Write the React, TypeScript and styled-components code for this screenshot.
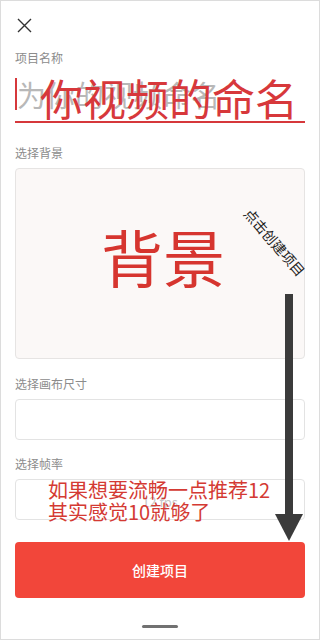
import styled, { createGlobalStyle } from "styled-components";

const GlobalStyle = createGlobalStyle`
  html, body {
    margin: 0;
    padding: 0;
    background: #ffffff;
  }
  body {
    font-family: "Noto Sans CJK SC", "Noto Sans", sans-serif;
  }
`;

const Screen = styled.div`
  position: relative;
  width: 320px;
  height: 640px;
  box-sizing: border-box;
  border: 1px solid #dcdcdc;
  padding: 0 14px;
  display: flex;
  flex-direction: column;
  background: #ffffff;
  overflow: hidden;
`;

const Header = styled.div`
  height: 49px;
  display: flex;
  align-items: flex-start;
  padding-top: 16px;
  box-sizing: border-box;
`;

const CloseButton = styled.button`
  width: 16px;
  height: 16px;
  margin-left: 1px;
  padding: 0;
  border: none;
  background: transparent;
  display: flex;
  align-items: center;
  justify-content: center;
`;

const Label = styled.div<{ $top?: number }>`
  margin-top: ${(p) => p.$top ?? 0}px;
  margin-bottom: 7px;
  font-size: 12px;
  line-height: 16px;
  color: #8c8c8c;
`;

const NameField = styled.div`
  height: 55px;
  margin-top: -7px;
  display: flex;
  align-items: center;
  border-bottom: 2px solid #d6383b;
`;

const Cursor = styled.span`
  width: 2px;
  height: 32px;
  background: #d6383b;
  flex-shrink: 0;
`;

const Placeholder = styled.span`
  font-size: 29px;
  line-height: 32px;
  color: #b8b8b8;
  white-space: nowrap;
`;

const BackgroundBox = styled.div`
  height: 191px;
  box-sizing: border-box;
  border: 1px solid #e6e4e3;
  border-radius: 4px;
  background: #fbf8f7;
  display: flex;
  align-items: center;
  justify-content: center;
  padding: 0 0 16px 6px;
`;

const BigRed = styled.span`
  font-size: 62px;
  line-height: 62px;
  color: #d6352f;
`;

const InputBox = styled.div`
  height: 41px;
  box-sizing: border-box;
  border: 1px solid #e3e3e3;
  border-radius: 4px;
  display: flex;
  align-items: center;
  justify-content: center;
`;

const FpsText = styled.span`
  font-size: 13px;
  color: #c6c6c6;
  margin-top: 4px;
`;

const CreateButton = styled.button`
  margin-top: 22px;
  height: 56px;
  border: none;
  border-radius: 4px;
  background: #f2463a;
  color: #ffffff;
  font-family: inherit;
  font-size: 14px;
  font-weight: 500;
`;

const HomeBar = styled.div`
  align-self: center;
  margin-top: 27px;
  width: 36px;
  height: 3px;
  border-radius: 2px;
  background: #717171;
`;

const NameOverlay = styled.div`
  position: absolute;
  left: 39px;
  top: 75px;
  font-size: 43px;
  line-height: 43px;
  color: #d7383b;
  white-space: nowrap;
`;

const TiltedNote = styled.div`
  position: absolute;
  left: 274px;
  top: 241px;
  transform: translate(-50%, -50%) rotate(49deg);
  font-size: 14px;
  color: #222222;
  white-space: nowrap;
`;

const Arrow = styled.svg`
  position: absolute;
  left: 273px;
  top: 293px;
`;

const RedNote = styled.div`
  position: absolute;
  left: 47px;
  top: 478px;
  font-size: 20px;
  line-height: 22px;
  color: #d43a33;
  white-space: nowrap;
`;

export default function App() {
  return (
    <>
      <GlobalStyle />
      <Screen>
        <Header>
          <CloseButton aria-label="close">
            <svg width="15" height="15" viewBox="0 0 15 15">
              <path d="M1 1L14 14M14 1L1 14" stroke="#333" strokeWidth="1.4" />
            </svg>
          </CloseButton>
        </Header>

        <Label>项目名称</Label>
        <NameField>
          <Cursor />
          <Placeholder>为你的视频命名</Placeholder>
        </NameField>

        <Label $top={22}>选择背景</Label>
        <BackgroundBox>
          <BigRed>背景</BigRed>
        </BackgroundBox>

        <Label $top={17}>选择画布尺寸</Label>
        <InputBox />

        <Label $top={16}>选择帧率</Label>
        <InputBox>
          <FpsText>12 fps</FpsText>
        </InputBox>

        <CreateButton>创建项目</CreateButton>
        <HomeBar />

        <NameOverlay>你视频的命名</NameOverlay>
        <TiltedNote>点击创建项目</TiltedNote>
        <Arrow width="30" height="250" viewBox="0 0 30 250">
          <rect x="11" y="0" width="8" height="222" fill="#3b3b3b" />
          <path d="M1 220L29 220L15 247Z" fill="#3b3b3b" />
        </Arrow>
        <RedNote>
          如果想要流畅一点推荐12
          <br />
          其实感觉10就够了
        </RedNote>
      </Screen>
    </>
  );
}
